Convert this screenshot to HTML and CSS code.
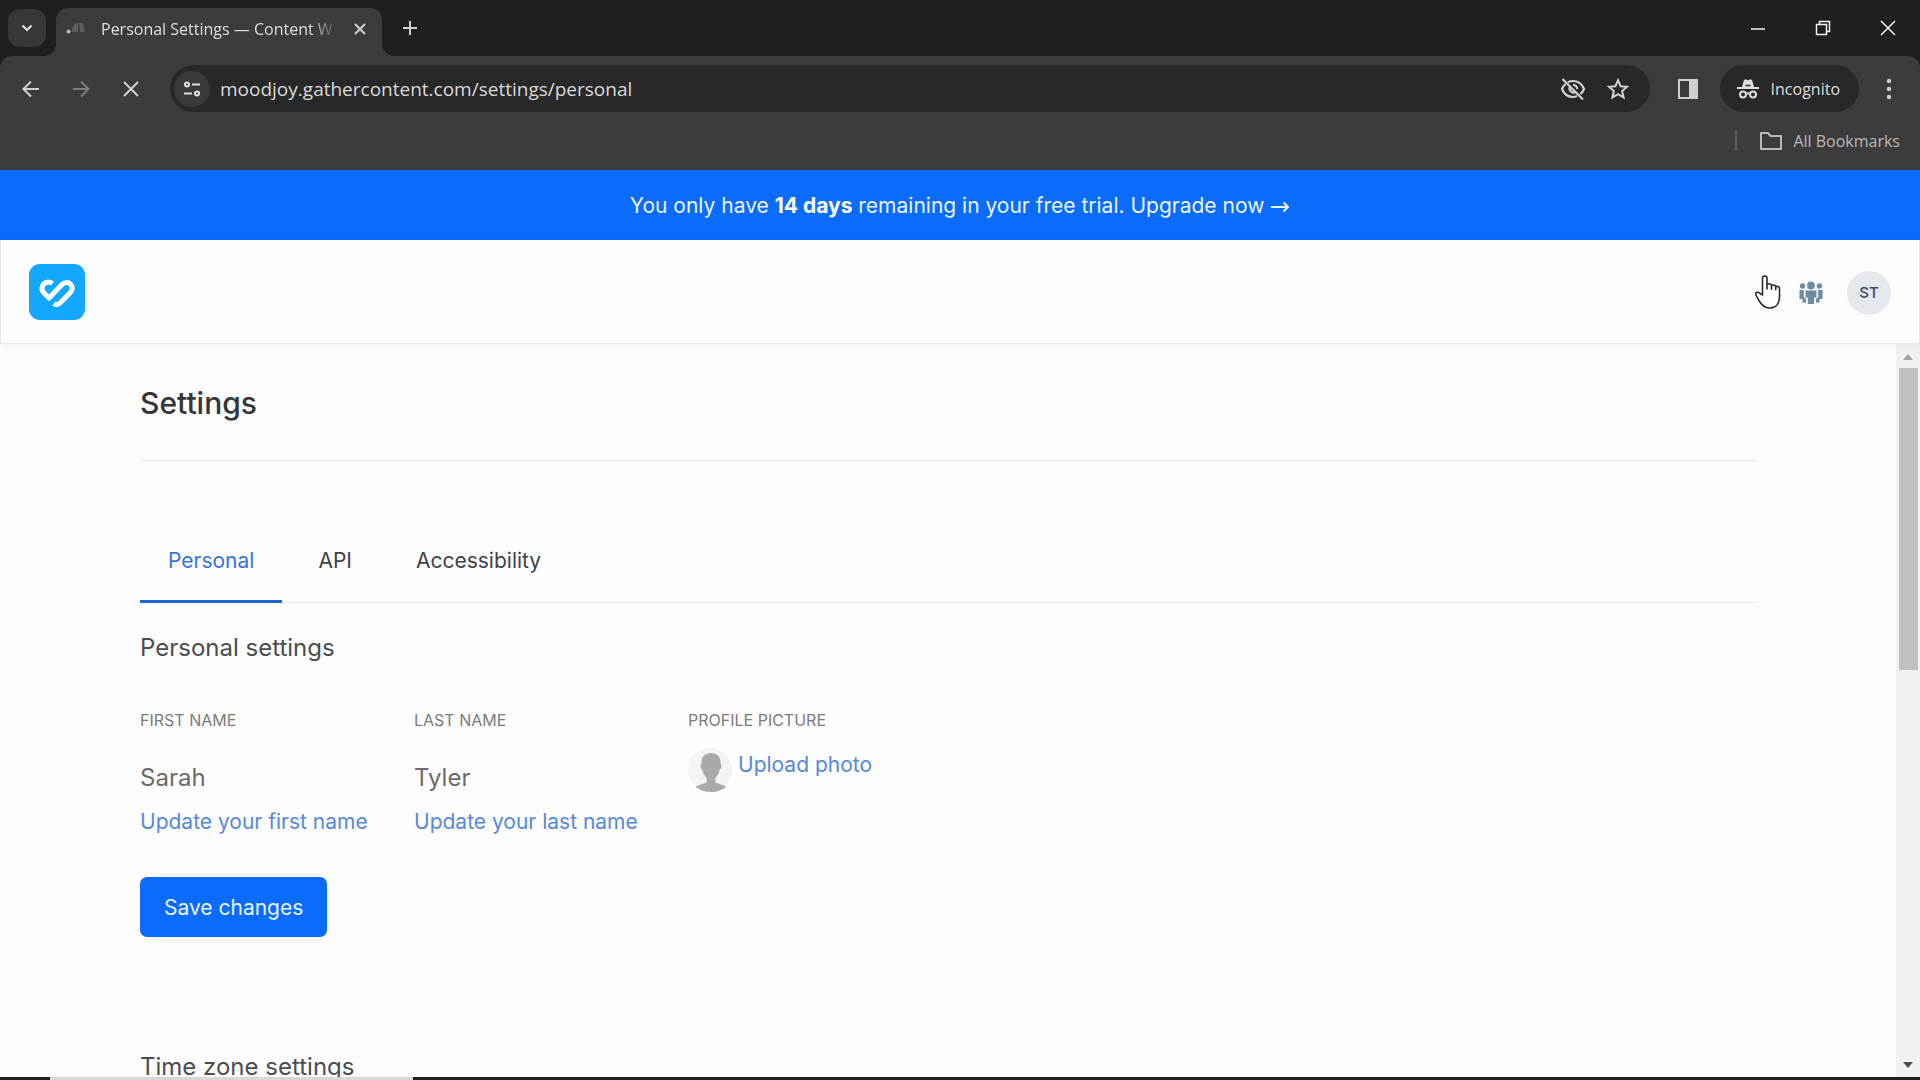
FILE: index.html
```html
<!DOCTYPE html>
<html lang="en">
<head>
<meta charset="utf-8">
<title>Personal Settings — Content Workflow</title>
<link rel="stylesheet" href="styles.css">
</head>
<body>
<div class="browser">
  <div class="tab-strip">
    <button class="tab-search" aria-label="Search tabs"><svg width="14" height="14" viewBox="0 0 14 14"><path d="M2.500 4.500 7 9l4.500-4.500" fill="none" stroke="currentColor" stroke-width="2.200"/></svg></button>
    <div class="browser-tab">
      <svg class="favicon" width="20" height="16" viewBox="0 0 20 16"><circle cx="2.500" cy="10.500" r="2" fill="#b5b5b5"/><path d="M5 11 9 2h3v9zM13 2h4l2 9h-5z" fill="#5e5e5e"/></svg>
      <span class="tab-title">Personal Settings — Content W</span>
      <button class="icon-button" aria-label="Close tab"><svg width="14" height="14" viewBox="0 0 14 14"><path d="m2 2 10 10M12 2 2 12" stroke="currentColor" stroke-width="2"/></svg></button>
    </div>
    <button class="icon-button new-tab" aria-label="New tab"><svg width="16" height="16" viewBox="0 0 16 16"><path d="M8 1v14M1 8h14" stroke="currentColor" stroke-width="2"/></svg></button>
    <div class="window-controls">
      <button class="icon-button" aria-label="Minimize"><svg width="16" height="16" viewBox="0 0 16 16"><path d="M1 9h14" stroke="currentColor" stroke-width="1.500"/></svg></button>
      <button class="icon-button" aria-label="Restore"><svg width="16" height="16" viewBox="0 0 16 16"><path d="M1.500 4.500h10v10h-10zM4.500 4.500v-3h10v10h-3" fill="none" stroke="currentColor" stroke-width="1.500"/></svg></button>
      <button class="icon-button" aria-label="Close window"><svg width="16" height="16" viewBox="0 0 16 16"><path d="m1 1 14 14M15 1 1 15" stroke="currentColor" stroke-width="1.500"/></svg></button>
    </div>
  </div>

  <div class="toolbar">
    <div class="address-row">
      <div class="nav-buttons">
        <button class="icon-button" aria-label="Back"><svg width="18" height="18" viewBox="0 0 18 18"><path d="M17 9H2M9 1.500 1.500 9 9 16.500" fill="none" stroke="currentColor" stroke-width="2"/></svg></button>
        <button class="icon-button" aria-label="Forward" disabled><svg width="18" height="18" viewBox="0 0 18 18"><path d="M1 9h15M9 1.500 16.500 9 9 16.500" fill="none" stroke="currentColor" stroke-width="2"/></svg></button>
        <button class="icon-button" aria-label="Stop loading"><svg width="18" height="18" viewBox="0 0 18 18"><path d="m2 2 14 14M16 2 2 16" stroke="currentColor" stroke-width="2"/></svg></button>
      </div>
      <div class="omnibox">
        <button class="site-info" aria-label="View site information"><svg width="18" height="18" viewBox="0 0 18 18" fill="none" stroke="currentColor" stroke-width="2"><circle cx="4" cy="4.500" r="2"/><path d="M9 4.500h8M1 13.500h8"/><circle cx="14" cy="13.500" r="2"/></svg></button>
        <input class="url" type="text" aria-label="Address" value="moodjoy.gathercontent.com/settings/personal">
        <button class="icon-button" aria-label="Third-party cookies blocked"><svg width="26" height="22" viewBox="0 0 26 22" fill="none" stroke="currentColor" stroke-width="2.200"><path d="M8 4.300C9.500 3.400 11.200 3 13 3c5 0 9 3 11 8-.8 2-2 3.800-3.600 5.200M17 18c-1.200.6-2.600 1-4 1-5 0-9-3-11-8 .8-2 2-3.700 3.500-5"/><path d="M10.500 8a4 4 0 0 0 5.400 5.800M13 6.800a4.200 4.200 0 0 1 4.200 4.200M2.500 1 23 21.500"/></svg></button>
        <button class="icon-button" aria-label="Bookmark this tab"><svg width="24" height="24" viewBox="0 0 24 24"><path d="m12 3.200 2.600 6 6.400.6-4.900 4.300 1.500 6.300-5.600-3.300-5.600 3.300 1.500-6.300L3 9.800l6.400-.6z" fill="none" stroke="currentColor" stroke-width="2"/></svg></button>
      </div>
      <button class="icon-button side-panel" aria-label="Side panel"><svg width="22" height="22" viewBox="0 0 22 22"><path d="M2 2h18v18H2z" fill="none" stroke="currentColor" stroke-width="2"/><path d="M12 2h8v18h-8z" fill="currentColor"/></svg></button>
      <button class="incognito"><svg width="22" height="20" viewBox="0 0 22 20" fill="none" stroke="currentColor" stroke-width="2"><path d="M0 9h22"/><path d="M5.500 8 7.500 1h2l1.500.8L12.500 1h2l2 7z" fill="currentColor" stroke-width="1"/><path d="M8.500 6.500h5" stroke="#282828" stroke-width="1.500"/><circle cx="6" cy="15.500" r="3"/><circle cx="16" cy="15.500" r="3"/><path d="M9 15q2-1.500 4 0"/></svg><span>Incognito</span></button>
      <button class="icon-button" aria-label="Browser menu"><svg width="6" height="22" viewBox="0 0 6 22" fill="currentColor"><circle cx="3" cy="3" r="2.200"/><circle cx="3" cy="11" r="2.200"/><circle cx="3" cy="19" r="2.200"/></svg></button>
    </div>
    <div class="bookmarks">
      <button class="all-bookmarks"><svg width="24" height="20" viewBox="0 0 24 20"><path d="M2 2h7l2.500 3H22v13H2z" fill="none" stroke="currentColor" stroke-width="2" stroke-linejoin="round"/></svg><span>All Bookmarks</span></button>
    </div>
  </div>
</div>

<div class="trial-banner">
  <p>You only have <strong>14 days</strong> remaining in your free trial. <a href="#upgrade">Upgrade now <svg width="20" height="12" viewBox="0 0 20 12"><path d="M1 6h17M13.500 1.500 18 6l-4.500 4.500" fill="none" stroke="currentColor" stroke-width="2"/></svg></a></p>
</div>

<header class="app-header">
  <a class="logo" href="#home" aria-label="Home"><svg width="56" height="56" viewBox="0 0 56 56"><rect width="56" height="56" rx="11" fill="#12a8fb"/><path d="M23.500 19.500C20 17 15.500 18 13.600 21.500c-1.500 3-.6 5.300 1.400 7.500l5 5L33 20.500c2.700-2.600 6.300-2.600 8.600-.3 2.300 2.400 2.300 5.800-.2 8.300L31 39c-2.200 2-4.300 2-6 .4" fill="none" stroke="#fff" stroke-width="5" stroke-linejoin="round"/></svg></a>
  <div class="header-actions">
    <a href="#people" aria-label="People"><svg width="24" height="24" viewBox="0 0 24 24" fill="#6d8ba2"><circle cx="3.500" cy="5" r="2.700"/><circle cx="20.500" cy="5" r="2.700"/><circle cx="12" cy="4.500" r="3.900"/><path d="M6.500 9.500h11v7h-2.300V23H8.800v-6.500H6.500zM.5 9h4.300v7L7 18v3.500H3.500V18H.5zM23.500 9h-4.300v7L17 18v3.500h3.500V18h3z"/></svg></a>
    <button class="user-menu" aria-label="Account menu">ST</button>
  </div>
  <svg class="pointer" width="26" height="34" viewBox="0 0 26 34" aria-hidden="true"><path d="M7.500 20V3.500Q7.500 1 9.800 1T12 3.500V14 9.800q0-1 2-1t2.500 1.400v4-3.400q.2-1 2-.8t2.200 1.400v3.400-2.600q.2-1 1.800-.8t2 1.600V22c0 7-4 11-10 11-5 0-8-3-11-8L1 20q-.8-2.200.8-2.700 1.500-.3 2.900.8z" fill="#fff" stroke="#2a2a2e" stroke-width="1.600" stroke-linejoin="round"/></svg>
</header>

<div class="viewport">
  <main class="settings">
    <h1>Settings</h1>
    <nav class="tabs" aria-label="Settings sections">
      <a class="tab tab-active" href="#personal">Personal</a>
      <a class="tab" href="#api">API</a>
      <a class="tab" href="#accessibility">Accessibility</a>
    </nav>
    <form class="personal">
      <h2>Personal settings</h2>
      <div class="fields">
        <div class="field">
          <label for="first-name">First name</label>
          <input id="first-name" type="text" value="Sarah">
          <a href="#first-name">Update your first name</a>
        </div>
        <div class="field">
          <label for="last-name">Last name</label>
          <input id="last-name" type="text" value="Tyler">
          <a href="#last-name">Update your last name</a>
        </div>
        <div class="field">
          <span class="field-title">Profile picture</span>
          <div class="photo">
            <svg width="44" height="44" viewBox="0 0 44 44"><circle cx="22" cy="22" r="22" fill="#f4f4f4"/><path d="M23 5c6 0 9.500 3.500 9.500 9.500l1 3.500c0 2-.8 3-1.800 3.500-.5 3.500-2 6-4.200 8v5l11 4c-4 3.500-9 5.500-15.500 5.500S11.500 42 7.500 38.500l11-4v-5c-2.200-2-3.700-4.500-4.200-8-1-.5-1.800-1.500-1.800-3.500l1-3.500C13.500 8.500 17 5 23 5z" fill="#a9a9a9"/></svg>
            <a href="#photo">Upload photo</a>
          </div>
        </div>
      </div>
      <button class="save" type="button">Save changes</button>
    </form>
    <section class="time-zone">
      <h2>Time zone settings</h2>
    </section>
  </main>
  <div class="scrollbar" aria-hidden="true">
    <svg width="10" height="6" viewBox="0 0 10 6"><path d="M0 6 5 0l5 6z" fill="#a3a3a3"/></svg>
    <div class="track"><div class="thumb"></div></div>
    <svg width="10" height="6" viewBox="0 0 10 6"><path d="m0 0 5 6 5-6z" fill="#505050"/></svg>
  </div>
</div>
<div class="taskbar"><div class="taskbar-item"></div></div>
</body>
</html>
```
FILE: styles.css
```css
* { box-sizing: border-box; }

body {
  margin: 0;
  height: 100vh;
  display: flex;
  flex-direction: column;
  overflow: hidden;
  background: #fdfdfd;
  color: #3f4247;
  font: 21px/28px Inter, "Liberation Sans", sans-serif;
}

h1, h2, p { margin: 0; }
a { color: inherit; text-decoration: none; }
svg { display: block; flex: none; }

button {
  border: 0;
  padding: 0;
  background: none;
  color: inherit;
  font: inherit;
  cursor: pointer;
}

/* Browser chrome */
.browser {
  flex: none;
  background: #1f1f1f;
  color: #dedede;
  font: 16px/24px "Open Sans", "Noto Sans", sans-serif;
}

.tab-strip {
  display: flex;
  align-items: center;
  height: 56px;
}

.tab-search {
  display: grid;
  place-items: center;
  width: 38px;
  height: 38px;
  margin: 0 10px 0 8px;
  border-radius: 12px;
  background: #383838;
}

.browser-tab {
  position: relative;
  display: flex;
  align-items: center;
  align-self: flex-end;
  width: 326px;
  height: 48px;
  padding: 0 10px 6px 10px;
  border-radius: 12px 12px 0 0;
  background: #3c3c3c;
}

/* Flared feet that join the active tab to the toolbar */
.browser-tab::before,
.browser-tab::after {
  content: "";
  position: absolute;
  bottom: 0;
  width: 12px;
  height: 12px;
}
.browser-tab::before {
  right: 100%;
  background: radial-gradient(circle at 0 0, transparent 12px, #3c3c3c 12px);
}
.browser-tab::after {
  left: 100%;
  background: radial-gradient(circle at 100% 0, transparent 12px, #3c3c3c 12px);
}

.tab-title {
  flex: 1;
  margin: 0 10px 0 15px;
  overflow: hidden;
  white-space: nowrap;
  mask-image: linear-gradient(90deg, #000 88%, transparent);
}

.icon-button {
  display: grid;
  place-items: center;
  flex: none;
  min-width: 24px;
  min-height: 24px;
  color: #d0d0d0;
}
.icon-button:disabled { color: #7c7c7c; }

.new-tab { margin-left: 16px; }

.window-controls {
  display: flex;
  gap: 41px;
  margin-left: auto;
  padding-right: 20px;
}
.window-controls .icon-button { color: #f0f0f0; }

.toolbar {
  padding-top: 9px;
  border-radius: 12px 12px 0 0;
  background: #3c3c3c;
}

.address-row {
  display: flex;
  align-items: center;
  padding: 0 19px;
}

.nav-buttons {
  display: flex;
  gap: 26px;
  margin-right: 27px;
}

.omnibox {
  flex: 1;
  display: flex;
  align-items: center;
  gap: 20px;
  height: 47px;
  padding: 0 20px 0 4px;
  border-radius: 24px;
  background: #282828;
}

.site-info {
  display: grid;
  place-items: center;
  width: 36px;
  height: 36px;
  border-radius: 50%;
  background: #3a3a3a;
}

.url {
  flex: 1;
  min-width: 0;
  margin-left: -10px;
  border: 0;
  padding: 0;
  background: none;
  color: #d9d9d9;
  font: 19px/28px "Open Sans", "Noto Sans", sans-serif;
}

.side-panel { margin: 0 20px 0 26px; }

.incognito {
  display: flex;
  align-items: center;
  gap: 12px;
  height: 47px;
  margin-right: 18px;
  padding: 0 19px 0 17px;
  border-radius: 24px;
  background: #282828;
}

.bookmarks {
  display: flex;
  align-items: center;
  justify-content: flex-end;
  height: 58px;
  padding-right: 20px;
}

.all-bookmarks {
  display: flex;
  align-items: center;
  gap: 10px;
  height: 20px;
  padding-left: 22px;
  border-left: 2px solid #5c5c5c;
  color: #b9b9b9;
}

/* Trial banner */
.trial-banner {
  flex: none;
  display: grid;
  place-items: center;
  height: 70px;
  padding-top: 2px;
  background: #0b6bfa;
  color: #e9f4ff;
}
.trial-banner strong { color: #fff; font-weight: 700; }
.trial-banner svg { display: inline-block; }

/* App header */
.app-header {
  position: relative;
  z-index: 1;
  flex: none;
  display: flex;
  align-items: center;
  justify-content: space-between;
  height: 104px;
  padding: 0 28px;
  border: 1px solid #e6e7e9;
  border-top: 0;
  box-shadow: 0 2px 6px rgba(0, 0, 0, 0.05);
  background: #fdfdfd;
}

.header-actions {
  display: flex;
  align-items: center;
  gap: 24px;
  padding-top: 2px;
}

.user-menu {
  width: 44px;
  height: 44px;
  border-radius: 50%;
  background: #e5e8ec;
  color: #42465c;
  font-size: 15px;
  font-weight: 500;
}

.pointer {
  position: absolute;
  top: 35px;
  right: 138px;
}

/* Settings page */
.viewport {
  flex: 1;
  min-height: 0;
  display: flex;
}

.settings {
  flex: 1;
  padding: 39px 139px 0 140px;
  overflow: hidden;
}

h1 {
  padding-bottom: 37px;
  border-bottom: 1px solid #e8e9eb;
  color: #33363b;
  font-size: 30px;
  line-height: 40px;
  font-weight: 500;
}

h2 {
  color: #4a4d52;
  font-size: 24px;
  line-height: 32px;
  font-weight: 400;
}

.tabs {
  display: flex;
  gap: 8px;
  margin-top: 86px;
  box-shadow: inset 0 -1px #e8e9eb;
}

.tab {
  padding: 0 28px 25px;
  border-bottom: 3px solid transparent;
}
.tab-active {
  border-color: #1f66d0;
  color: #3674db;
}

.personal { padding-top: 29px; }

.fields {
  display: flex;
  margin-top: 46px;
}

.field {
  display: flex;
  flex-direction: column;
  width: 274px;
}
.field a { color: #5689da; }

.field label,
.field-title {
  color: #7b7b7b;
  font-size: 16px;
  line-height: 20px;
  text-transform: uppercase;
}

.field input {
  width: 246px;
  height: 36px;
  margin: 29px 0 13px;
  border: 0;
  padding: 0;
  background: none;
  color: #6b6b6b;
  font: inherit;
  font-size: 24px;
}

.photo {
  display: flex;
  gap: 6px;
  margin-top: 18px;
}
.photo a { padding-top: 3px; }

.save {
  height: 60px;
  margin-top: 41px;
  padding: 1px 24px 0;
  border-radius: 7px;
  background: #0b6bfa;
  color: #e9f4ff;
}

.time-zone {
  margin-top: 62px;
  padding-top: 51px;
  border-top: 1px solid #fafafa;
}

.scrollbar {
  flex: none;
  display: flex;
  flex-direction: column;
  align-items: center;
  width: 24px;
  padding: 10px 0 9px;
  background: #f1f1f1;
}
.track {
  flex: 1;
  align-self: stretch;
  margin: 8px 2px 8px 3px;
}
.thumb {
  height: 44%;
  background: #c0c0c0;
}

.taskbar {
  flex: none;
  height: 3px;
  padding-left: 50px;
  background: #231f20;
}
.taskbar-item {
  width: 363px;
  height: 3px;
  background: #d8d8d8;
}
```
